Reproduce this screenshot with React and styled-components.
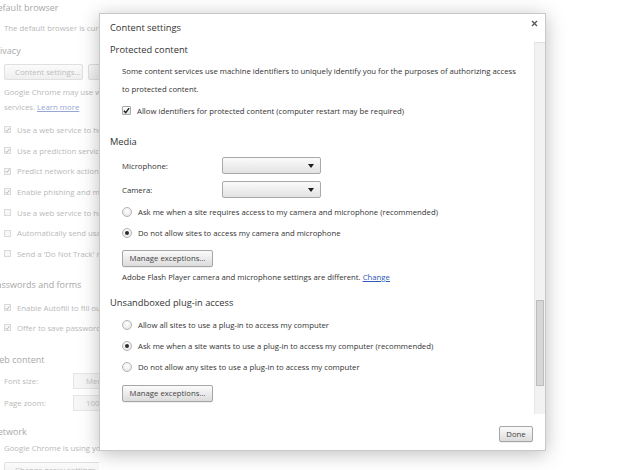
import React from 'react'
import styled, { createGlobalStyle } from 'styled-components'

const GlobalStyle = createGlobalStyle`
  html, body {
    margin: 0;
    padding: 0;
    background: #fff;
  }
  body {
    width: 624px;
    height: 470px;
    overflow: hidden;
    position: relative;
    font-family: "Open Sans", "DejaVu Sans", sans-serif;
  }
`

// ---- faded settings page behind the dialog ----

const Page = styled.div`
  margin-left: -9px;
  width: 108px;
  overflow: hidden;
  font-size: 7.8px;
  color: #b9b9b9;
  white-space: nowrap;
`

const PageHeading = styled.div`
  margin-top: ${p => p.$top || 0}px;
  height: 16px;
  line-height: 16px;
  font-size: 9px;
  color: #a8a8a8;
`

const PageSection = styled.div`
  padding-left: 13px;
  margin-top: ${p => p.$top || 0}px;
`

const PageText = styled.div`
  line-height: 15px;
`

const PageLink = styled.span`
  color: #98a6d6;
  text-decoration: underline;
`

const PageButtons = styled.div`
  display: flex;
  gap: 5px;
`

const PageButton = styled.div`
  height: 16px;
  box-sizing: border-box;
  padding: 0 10px;
  border: 1px solid #e0e0e0;
  border-radius: 2px;
  background: linear-gradient(#fbfbfb, #efefef);
  line-height: 14px;
  color: #bdbdbd;
  width: ${p => (p.$w ? p.$w + 'px' : 'auto')};
  flex-shrink: 0;
`

const PageCheckRow = styled.div`
  display: flex;
  align-items: center;
  gap: 6px;
  height: ${p => p.$h || 20.7}px;
`

const PageBox = styled.span`
  width: 7px;
  height: 7px;
  box-sizing: border-box;
  border: 1px solid #dadada;
  background: #f7f7f7;
  display: inline-flex;
  align-items: center;
  justify-content: center;
  flex-shrink: 0;
`

const PageField = styled.div`
  display: flex;
  align-items: center;
  height: 16px;
  margin-top: ${p => p.$top || 0}px;
`

const PageLabel = styled.span`
  width: 69px;
  flex-shrink: 0;
`

const PageSelect = styled.div`
  width: 60px;
  flex-shrink: 0;
  height: 16px;
  box-sizing: border-box;
  border: 1px solid #e6e6e6;
  background: #f6f6f6;
  padding-left: 12px;
  line-height: 14px;
  color: #c4c4c4;
`

// ---- dialog ----

const Dialog = styled.div`
  position: absolute;
  left: 99px;
  top: 13px;
  width: 447px;
  height: 438px;
  box-sizing: border-box;
  background: #fff;
  border: 1px solid #c8c8c8;
  box-shadow: 0 3px 18px rgba(0, 0, 0, 0.26);
  display: flex;
  flex-direction: column;
  font-size: 7.75px;
  color: #333;
`

const Header = styled.div`
  height: 28px;
  flex-shrink: 0;
  display: flex;
  align-items: center;
  justify-content: space-between;
  padding: 0 7px 2px 10px;
  box-sizing: border-box;
`

const Title = styled.div`
  font-size: 9.3px;
  color: #333;
`

const Close = styled.div`
  width: 8px;
  height: 8px;
  margin-top: -7px;
  display: flex;
  align-items: center;
  justify-content: center;
`

const Body = styled.div`
  flex: 1;
  display: flex;
  min-height: 0;
`

const Content = styled.div`
  flex: 1;
  padding-left: 10px;
  overflow: hidden;
`

const Scrollbar = styled.div`
  width: 11px;
  box-sizing: border-box;
  background: #f2f2f2;
  border-left: 1px solid #e6e6e6;
  border-top: 1px solid #e0e0e0;
  display: flex;
  flex-direction: column;
  align-items: center;
`

const Thumb = styled.div`
  margin-top: 257px;
  width: 8px;
  height: 86px;
  box-sizing: border-box;
  background: #d6d6d6;
  border: 1px solid #bcbcbc;
`

const Footer = styled.div`
  height: 36px;
  flex-shrink: 0;
  display: flex;
  justify-content: flex-end;
  align-items: flex-start;
  padding: 12px 12px 0 0;
  box-sizing: border-box;
`

const SectionTitle = styled.div`
  margin-top: ${p => p.$top || 0}px;
  height: 16px;
  line-height: 16px;
  font-size: 9.3px;
  color: #333;
`

const Indent = styled.div`
  padding-left: 12px;
  margin-top: ${p => p.$top || 0}px;
`

const Paragraph = styled.div`
  line-height: 18px;
`

const OptionGroup = styled.div`
  margin-top: ${p => p.$top || 0}px;
`

const OptionRow = styled.label`
  display: flex;
  align-items: center;
  gap: 6px;
  height: 21px;
`

const CheckBox = styled.span`
  width: 9px;
  height: 9px;
  box-sizing: border-box;
  border: 1px solid #a8a8a8;
  border-radius: 1px;
  background: linear-gradient(#ffffff, #e4e4e4);
  display: inline-flex;
  align-items: center;
  justify-content: center;
  flex-shrink: 0;
`

const Radio = styled.span`
  width: 10px;
  height: 10px;
  box-sizing: border-box;
  border-radius: 50%;
  border: 1px solid #b3b3b3;
  background: radial-gradient(circle at 50% 35%, #ffffff, #e2e2e2);
  display: inline-flex;
  align-items: center;
  justify-content: center;
  flex-shrink: 0;

  &::after {
    content: '';
    width: 4px;
    height: 4px;
    border-radius: 50%;
    background: #2d2d2d;
    display: ${p => (p.$on ? 'block' : 'none')};
  }
`

const Field = styled.div`
  display: flex;
  align-items: center;
  height: 17px;
  margin-top: ${p => p.$top || 0}px;
`

const FieldLabel = styled.span`
  width: 100px;
`

const Select = styled.div`
  width: 99px;
  height: 17px;
  box-sizing: border-box;
  border: 1px solid #a9a9a9;
  border-radius: 2px;
  background: linear-gradient(#fafafa, #e3e3e3);
  display: flex;
  align-items: center;
  justify-content: flex-end;
  padding-right: 6px;

  &::after {
    content: '';
    border-left: 3px solid transparent;
    border-right: 3px solid transparent;
    border-top: 4px solid #1e1e1e;
  }
`

const Button = styled.button`
  display: block;
  margin-top: ${p => p.$top || 0}px;
  width: ${p => p.$w}px;
  height: ${p => p.$h || 17}px;
  padding: 0 0 1px;
  font-family: inherit;
  font-size: 7.75px;
  color: #444;
  border: 1px solid #a6a6a6;
  border-radius: 2px;
  background: linear-gradient(#fbfbfb, #dcdcdc);
  box-shadow: 0 1px 0 rgba(0, 0, 0, 0.06);
`

const Note = styled.div`
  margin-top: ${p => p.$top || 0}px;
  line-height: 18px;
`

const Link = styled.a`
  color: #3058b8;
  text-decoration: underline;
`

const Tick = ({ color = '#222', size = 7 }) => (
  <svg width={size} height={size} viewBox="0 0 8 8">
    <path d="M1 4.3 L3.1 6.4 L7 1.2" fill="none" stroke={color} strokeWidth="1.6" />
  </svg>
)

const CloseIcon = () => (
  <svg width="7" height="7" viewBox="0 0 7 7">
    <path d="M1 1 L6 6 M6 1 L1 6" stroke="#555" strokeWidth="1.3" />
  </svg>
)

const pageChecks = [
  ['Use a web service to help resolve navigation errors', true],
  ['Use a prediction service to help complete searches and URLs', true],
  ['Predict network actions to improve page load performance', true],
  ['Enable phishing and malware protection', true],
  ['Use a web service to help resolve spelling errors', false],
  ['Automatically send usage statistics and crash reports to Google', false],
  ["Send a 'Do Not Track' request with your browsing traffic", false],
]

function SettingsPage() {
  return (
    <Page>
      <PageHeading>Default browser</PageHeading>
      <PageSection $top={4.5}>
        <PageText>The default browser is currently Google Chrome.</PageText>
      </PageSection>

      <PageHeading $top={7.5}>Privacy</PageHeading>
      <PageSection $top={5}>
        <PageButtons>
          <PageButton $w={79}>Content settings...</PageButton>
          <PageButton>Clear browsing data...</PageButton>
        </PageButtons>
        <div style={{ marginTop: 4.5 }}>
          <PageText>Google Chrome may use web services to improve your browsing experience.</PageText>
          <PageText>
            services. <PageLink>Learn more</PageLink>
          </PageText>
        </div>
        <div style={{ marginTop: 5 }}>
          {pageChecks.map(([label, on]) => (
            <PageCheckRow key={label}>
              <PageBox>{on && <Tick color="#b5b5b5" size={6} />}</PageBox>
              {label}
            </PageCheckRow>
          ))}
        </div>
      </PageSection>

      <PageHeading $top={12.5}>Passwords and forms</PageHeading>
      <PageSection $top={5}>
        <PageCheckRow $h={20}>
          <PageBox><Tick color="#b5b5b5" size={6} /></PageBox>
          Enable Autofill to fill out web forms in a single click.
        </PageCheckRow>
        <PageCheckRow $h={20}>
          <PageBox><Tick color="#b5b5b5" size={6} /></PageBox>
          Offer to save passwords I enter on the web.
        </PageCheckRow>
      </PageSection>

      <PageHeading $top={14}>Web content</PageHeading>
      <PageSection>
        <PageField $top={5}>
          <PageLabel>Font size:</PageLabel>
          <PageSelect>Medium</PageSelect>
        </PageField>
        <PageField $top={6}>
          <PageLabel>Page zoom:</PageLabel>
          <PageSelect>100%</PageSelect>
        </PageField>
      </PageSection>

      <PageHeading $top={13}>Network</PageHeading>
      <PageSection $top={1.5}>
        <PageText>Google Chrome is using your computer's system proxy settings to connect to the network.</PageText>
        <div style={{ marginTop: 5.5 }}>
          <PageButtons>
            <PageButton>Change proxy settings...</PageButton>
          </PageButtons>
        </div>
      </PageSection>
    </Page>
  )
}

function ContentSettings() {
  return (
    <Dialog>
      <Header>
        <Title>Content settings</Title>
        <Close><CloseIcon /></Close>
      </Header>
      <Body>
        <Content>
          <SectionTitle>Protected content</SectionTitle>
          <Indent $top={4}>
            <Paragraph>
              Some content services use machine identifiers to uniquely identify you for the purposes of authorizing access
              <br />
              to protected content.
            </Paragraph>
            <OptionGroup $top={2}>
              <OptionRow>
                <CheckBox><Tick /></CheckBox>
                Allow identifiers for protected content (computer restart may be required)
              </OptionRow>
            </OptionGroup>
          </Indent>

          <SectionTitle $top={13}>Media</SectionTitle>
          <Indent>
            <Field $top={7}>
              <FieldLabel>Microphone:</FieldLabel>
              <Select />
            </Field>
            <Field $top={7}>
              <FieldLabel>Camera:</FieldLabel>
              <Select />
            </Field>
            <OptionGroup $top={3}>
              <OptionRow>
                <Radio />
                Ask me when a site requires access to my camera and microphone (recommended)
              </OptionRow>
              <OptionRow>
                <Radio $on />
                Do not allow sites to access my camera and microphone
              </OptionRow>
            </OptionGroup>
            <Button $top={7} $w={91}>Manage exceptions...</Button>
            <Note $top={1}>
              Adobe Flash Player camera and microphone settings are different. <Link>Change</Link>
            </Note>
          </Indent>

          <SectionTitle $top={9}>Unsandboxed plug-in access</SectionTitle>
          <Indent $top={3}>
            <OptionRow>
              <Radio />
              Allow all sites to use a plug-in to access my computer
            </OptionRow>
            <OptionRow>
              <Radio $on />
              Ask me when a site wants to use a plug-in to access my computer (recommended)
            </OptionRow>
            <OptionRow>
              <Radio />
              Do not allow any sites to use a plug-in to access my computer
            </OptionRow>
            <Button $top={8} $w={91}>Manage exceptions...</Button>
          </Indent>
        </Content>
        <Scrollbar>
          <Thumb />
        </Scrollbar>
      </Body>
      <Footer>
        <Button $w={34} $h={16}>Done</Button>
      </Footer>
    </Dialog>
  )
}

export default function App() {
  return (
    <>
      <GlobalStyle />
      <SettingsPage />
      <ContentSettings />
    </>
  )
}
